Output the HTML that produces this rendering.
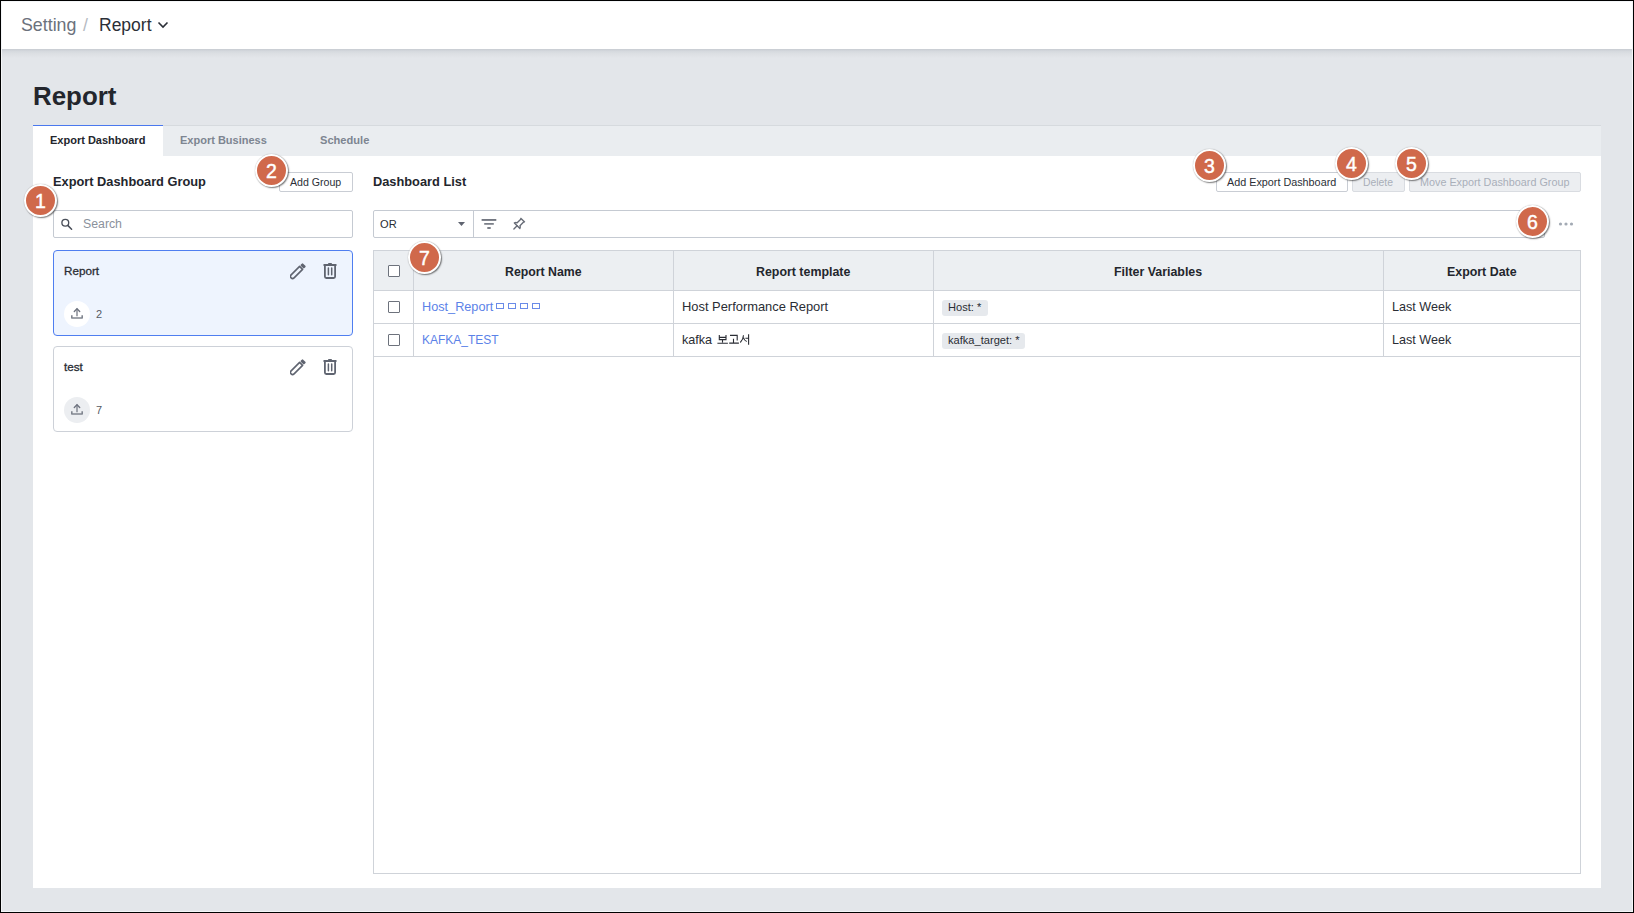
<!DOCTYPE html>
<html><head><meta charset="utf-8">
<style>
*{margin:0;padding:0;box-sizing:border-box}
html,body{width:1634px;height:913px;overflow:hidden}
body{background:#e3e6ea;font-family:"Liberation Sans",sans-serif;color:#2a2d34;position:relative}
.a{position:absolute;white-space:nowrap;line-height:1}
.frame{position:absolute;left:0;top:0;width:1634px;height:913px;border:1px solid #000;z-index:50;pointer-events:none}
.frame:after{content:"";position:absolute;left:0;top:0;right:0;bottom:0;border:1px solid #f4f6f8}
#hdr{position:absolute;left:0;top:0;width:1634px;height:49px;background:#fff}
#shadow{position:absolute;left:0;top:49px;width:1634px;height:9px;background:linear-gradient(#c8ccd2 0,#d5d9de 25%,#dde0e4 55%,#e3e6ea 100%)}
#tabbar{position:absolute;left:33px;top:125px;width:1568px;height:31px;background:#eaedf0;border-top:1px solid #d6dade}
#acttab{position:absolute;left:33px;top:125px;width:130px;height:31px;background:#fff;border-top:1px solid #4a78ee}
#panel{position:absolute;left:33px;top:156px;width:1568px;height:732px;background:#fff}
.btn{position:absolute;height:20px;border:1px solid #c9cdd4;border-radius:2px;background:#fff}
.btn.dis{background:#eceef1;border-color:#d9dce1}
.card{position:absolute;left:53px;width:300px;height:86px;border:1px solid #cdd1d8;border-radius:4px;background:#fff}
.card.sel{background:#eef4fe;border-color:#4f7ef0}
.up{position:absolute;width:26px;height:26px;border-radius:50%;background:#eceef1}
.sel .up{background:#fff}
.badge{position:absolute;width:33px;height:33px;border-radius:50%;background:#d0694b;border:2px solid #fff;box-shadow:0 0 1px rgba(0,0,0,.35),1px 1px 1.5px rgba(0,0,0,.5);z-index:20;color:#fff;font-size:19.5px;-webkit-text-stroke:0.45px #fff;text-align:center;line-height:31px;font-family:"Liberation Sans",sans-serif}
.tbl{position:absolute;left:373px;top:250px;width:1208px;height:624px;border:1px solid #cfd3d9;background:#fff}
.th{position:absolute;top:0;height:40px;background:#eceff2;border-bottom:1px solid #cfd3d9}
.vl{position:absolute;width:1px;background:#cfd3d9}
.hl{position:absolute;height:1px;background:#cfd3d9}
.cb{position:absolute;width:12px;height:12px;border:1px solid #6d727c;border-radius:1px;background:#fff}
.tag{position:absolute;height:16px;background:#e6e9ed;border-radius:3px}
.tofu{position:absolute;width:8px;height:6px;border:1px solid #6a8be8}
</style></head><body>
<div id="hdr"></div>
<div id="shadow"></div>
<div class="frame"></div>

<!-- breadcrumb -->
<div class="a" style="left:21px;top:17px;font-size:17.8px;color:#6b717c">Setting</div>
<div class="a" style="left:83px;top:17px;font-size:17.6px;color:#b5bac2">/</div>
<div class="a" style="left:99px;top:17px;font-size:17.5px;color:#2b2f37">Report</div>
<svg class="a" style="left:156px;top:19px;z-index:6" width="14" height="12" viewBox="0 0 14 12"><path d="M2.5 3.5 L7 8 L11.5 3.5" fill="none" stroke="#2b2f37" stroke-width="1.6"/></svg>

<!-- title -->
<div class="a" style="left:33px;top:84px;font-size:25.9px;font-weight:bold;color:#23262d">Report</div>

<div id="tabbar"></div>
<div id="acttab"></div>
<div class="a" style="left:50px;top:135px;font-size:11px;font-weight:bold;color:#23262d">Export Dashboard</div>
<div class="a" style="left:180px;top:135px;font-size:11px;font-weight:bold;color:#7d8591">Export Business</div>
<div class="a" style="left:320px;top:135px;font-size:11.1px;font-weight:bold;color:#7d8591">Schedule</div>

<div id="panel"></div>

<!-- left panel -->
<div class="a" style="left:53px;top:176px;font-size:12.8px;font-weight:bold;color:#23262d">Export Dashboard Group</div>
<div class="btn" style="left:279px;top:172px;width:74px"></div>
<div class="a" style="left:290px;top:177px;font-size:10.6px;color:#2b2f37">Add Group</div>

<div style="position:absolute;left:53px;top:210px;width:300px;height:28px;border:1px solid #c5cad2;border-radius:2px;background:#fff"></div>
<svg class="a" style="left:56px;top:214px" width="20" height="20"><circle cx="9.3" cy="8.7" r="3.4" fill="none" stroke="#4a4f5a" stroke-width="1.35"/><path d="M12 11.6 L15.6 15.2" stroke="#4a4f5a" stroke-width="1.5" stroke-linecap="round"/></svg>
<div class="a" style="left:83px;top:218px;font-size:12.3px;color:#8a919c">Search</div>

<div class="card sel" style="top:250px"></div>
<div class="a" style="left:64px;top:265px;font-size:11.7px;color:#2a2d34;-webkit-text-stroke:0.3px #2a2d34">Report</div>
<div class="up" style="left:64px;top:301px;background:#fff"></div>
<div class="a" style="left:96px;top:309px;font-size:11px;color:#555a63">2</div>

<div class="card" style="top:346px"></div>
<div class="a" style="left:64px;top:361px;font-size:11.7px;color:#2a2d34;-webkit-text-stroke:0.3px #2a2d34">test</div>
<div class="up" style="left:64px;top:397px"></div>
<div class="a" style="left:96px;top:405px;font-size:11px;color:#555a63">7</div>

<!-- right panel -->
<div class="a" style="left:373px;top:176px;font-size:12.8px;font-weight:bold;color:#23262d">Dashboard List</div>
<div class="btn" style="left:1216px;top:172px;width:132px"></div>
<div class="a" style="left:1227px;top:177px;font-size:10.8px;color:#2b2f37">Add Export Dashboard</div>
<div class="btn dis" style="left:1352px;top:172px;width:53px"></div>
<div class="a" style="left:1363px;top:178px;font-size:10.4px;color:#a9afb9">Delete</div>
<div class="btn dis" style="left:1409px;top:172px;width:172px"></div>
<div class="a" style="left:1420px;top:177px;font-size:10.8px;color:#a9afb9">Move Export Dashboard Group</div>

<div style="position:absolute;left:373px;top:210px;width:1172px;height:28px;border:1px solid #c5cad2;border-radius:2px;background:#fff"></div>
<div class="vl" style="left:473px;top:211px;height:26px;background:#c5cad2"></div>
<div class="a" style="left:380px;top:219px;font-size:11.1px;color:#2a2d34">OR</div>
<svg class="a" style="left:457px;top:221px" width="9" height="6" viewBox="0 0 9 6"><path d="M1 1 L8 1 L4.5 5 Z" fill="#5f6470"/></svg>

<div class="tbl">
  <div class="th" style="left:0;width:1206px"></div>
</div>
<div class="vl" style="left:413px;top:251px;height:105px"></div>
<div class="vl" style="left:673px;top:251px;height:105px"></div>
<div class="vl" style="left:933px;top:251px;height:105px"></div>
<div class="vl" style="left:1383px;top:251px;height:105px"></div>
<div class="hl" style="left:374px;top:323px;width:1206px"></div>
<div class="hl" style="left:374px;top:356px;width:1206px"></div>

<div class="cb" style="left:388px;top:265px"></div>
<div class="cb" style="left:388px;top:301px"></div>
<div class="cb" style="left:388px;top:334px"></div>

<div class="a" style="left:505px;top:266px;font-size:12.3px;font-weight:bold;color:#23262d">Report Name</div>
<div class="a" style="left:756px;top:266px;font-size:12.4px;font-weight:bold;color:#23262d">Report template</div>
<div class="a" style="left:1114px;top:266px;font-size:12.4px;font-weight:bold;color:#23262d">Filter Variables</div>
<div class="a" style="left:1447px;top:266px;font-size:12.4px;font-weight:bold;color:#23262d">Export Date</div>

<div class="a" style="left:422px;top:301px;font-size:12.7px;color:#5b82e8">Host_Report</div>
<div class="tofu" style="left:496px;top:303px"></div>
<div class="tofu" style="left:508px;top:303px"></div>
<div class="tofu" style="left:520px;top:303px"></div>
<div class="tofu" style="left:532px;top:303px"></div>
<div class="a" style="left:422px;top:334px;font-size:12px;color:#5b82e8">KAFKA_TEST</div>

<div class="a" style="left:682px;top:301px;font-size:12.9px;color:#2a2d34">Host Performance Report</div>
<div class="a" style="left:682px;top:334px;font-size:12.6px;color:#2a2d34">kafka</div>

<div class="tag" style="left:942px;top:300px;width:46px"></div>
<div class="a" style="left:948px;top:302px;font-size:11.1px;color:#2a2d34">Host: *</div>
<div class="tag" style="left:942px;top:333px;width:83px"></div>
<div class="a" style="left:948px;top:335px;font-size:11.1px;color:#2a2d34">kafka_target: *</div>

<div class="a" style="left:1392px;top:301px;font-size:12.6px;color:#2a2d34">Last Week</div>
<div class="a" style="left:1392px;top:334px;font-size:12.6px;color:#2a2d34">Last Week</div>


<!-- icons -->
<svg class="a" style="left:0;top:0" width="0" height="0"><defs>
<g id="pencil"><g transform="translate(2.6 13.4) rotate(-45)"><path d="M12 -2.1 L0 -2.1 A2.1 2.1 0 0 0 0 2.1 L12 2.1 Z" fill="none" stroke="#5f6470" stroke-width="1.6" stroke-linejoin="round"/><rect x="13.3" y="-2.5" width="3.2" height="5" rx="1" fill="#5f6470"/></g></g>
<g id="trash"><path d="M0.5 2 H13.5" stroke="#5f6470" stroke-width="2"/><path d="M5.2 0.6 H8.8" stroke="#5f6470" stroke-width="1.4"/><path d="M1.9 2.6 V13.6 A1.4 1.4 0 0 0 3.3 15 H10.7 A1.4 1.4 0 0 0 12.1 13.6 V2.6" fill="none" stroke="#5f6470" stroke-width="1.8"/><path d="M5.4 5 V11.8 M8.7 5 V11.8" stroke="#5f6470" stroke-width="1.5" stroke-linecap="round"/></g>
<g id="upload"><path d="M6 1.5 V9.2" stroke="#80858f" stroke-width="1.4"/><path d="M3.3 4.5 L6 1.8 L8.7 4.5" fill="none" stroke="#6f7480" stroke-width="1.4" stroke-linecap="round"/><path d="M0.8 8.2 V11 H11.2 V8.2" fill="none" stroke="#80858f" stroke-width="1.6" stroke-linejoin="round"/></g>
</defs></svg>
<svg class="a" style="left:290px;top:263px" width="17" height="17"><use href="#pencil"/></svg>
<svg class="a" style="left:323px;top:263px" width="15" height="16"><use href="#trash"/></svg>
<svg class="a" style="left:290px;top:359px" width="17" height="17"><use href="#pencil"/></svg>
<svg class="a" style="left:323px;top:359px" width="15" height="16"><use href="#trash"/></svg>
<svg class="a" style="left:71px;top:307px" width="13" height="13"><use href="#upload"/></svg>
<svg class="a" style="left:71px;top:403px" width="13" height="13"><use href="#upload"/></svg>

<svg class="a" style="left:476px;top:214px" width="26" height="20"><path d="M5.6 5.95 H20.3" stroke="#5a5f6b" stroke-width="1.6"/><path d="M8.2 9.9 H17.8" stroke="#6d727c" stroke-width="1.6"/><path d="M11.3 14 H14.7" stroke="#5a5f6b" stroke-width="1.6"/></svg>
<svg class="a" style="left:508px;top:214px" width="22" height="20"><g transform="translate(5.6 15.2) rotate(-45)" fill="none" stroke="#666b76" stroke-width="1.35" stroke-linejoin="round"><path d="M12.8 -3.1 V3.1"/><path d="M12.5 -2 H7 Q6.6 -3.3 5 -3.9 V3.9 Q6.6 3.3 7 2 H12.5"/><path d="M5 0 H0.4" stroke-linecap="round"/></g></svg>

<svg class="a" style="left:1556px;top:220px" width="20" height="8"><circle cx="4.5" cy="4" r="1.6" fill="#a3aab4"/><circle cx="10" cy="4" r="1.6" fill="#a3aab4"/><circle cx="15.5" cy="4" r="1.6" fill="#a3aab4"/></svg>

<svg class="a" style="left:712px;top:328px" width="44" height="22"><g fill="none" stroke="#2a2d34" stroke-width="1.1"><path d="M7.3 7 V11.6 H14 V7 M7.3 9.4 H14 M10.5 11.8 V14.6 M5.4 15.3 H15.9"/><path d="M18 7.4 H25.2 V12.4 M21.5 10.8 V14.6 M17.2 15.1 H26.9"/><path d="M31.5 7.3 Q31.3 11.5 28.3 14.5 M31.5 9.5 Q32 12.5 34.7 13.5 M33.4 10.2 H36.3 M36.6 6.2 V16.7"/></g></svg>

<!-- badges -->
<div class="badge" style="left:24px;top:184px">1</div>
<div class="badge" style="left:255px;top:154px">2</div>
<div class="badge" style="left:1193px;top:149px">3</div>
<div class="badge" style="left:1335px;top:147px">4</div>
<div class="badge" style="left:1395px;top:147px">5</div>
<div class="badge" style="left:1516px;top:205px">6</div>
<div class="badge" style="left:408px;top:241px">7</div>
</body></html>
